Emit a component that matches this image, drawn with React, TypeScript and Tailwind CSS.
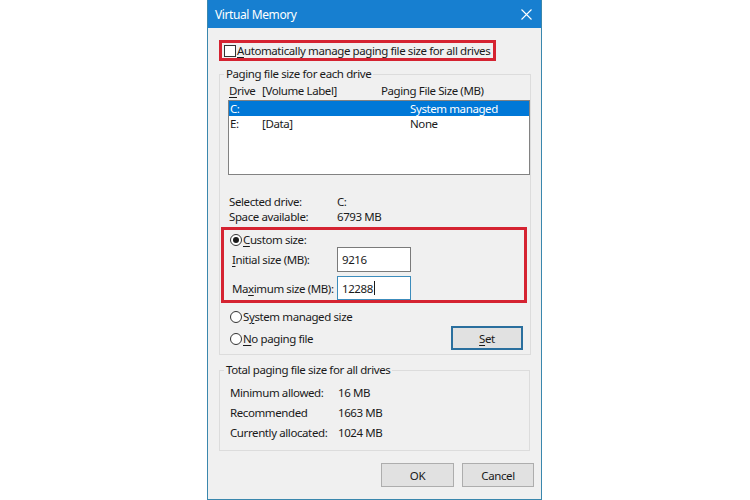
import React from "react";

const U = ({ children }: { children: React.ReactNode }) => (
  <span className="underline underline-offset-2 decoration-1">{children}</span>
);

const Radio = ({ checked }: { checked?: boolean }) => (
  <span className="w-[12px] h-[12px] rounded-full border border-[#333333] bg-white flex items-center justify-center shrink-0">
    {checked && <span className="w-[6px] h-[6px] rounded-full bg-[#1a1a1a]" />}
  </span>
);

export default function App() {
  return (
    <div
      className="w-[750px] h-[500px] bg-white text-[#1a1a1a] text-[11.5px] tracking-[-0.4px] leading-[15px] whitespace-nowrap"
      style={{ fontFamily: '"Noto Sans", "Open Sans", sans-serif' }}
    >
      <div className="ml-[207px] w-[335px] h-[500px] flex flex-col border-x border-b border-[#3a87ad] bg-[#f0f0f0]">
        {/* Title bar */}
        <div className="h-[28px] bg-[#177fd0] flex items-center justify-between pl-[7px] pr-[9px] text-white">
          <span className="pt-[1px] text-[12px]">Virtual Memory</span>
          <svg width="11" height="11" viewBox="0 0 11 11">
            <path d="M0.5 0.5 L10.5 10.5 M10.5 0.5 L0.5 10.5" stroke="white" strokeWidth="1.1" />
          </svg>
        </div>

        <div className="flex flex-col pl-[11px]">
          {/* Red box 1 */}
          <div className="mt-[12px] w-[277px] h-[21px] border-[3px] border-[#d52331] flex items-center">
            <span className="ml-[2px] w-[12px] h-[12px] border border-[#333333] bg-white shrink-0" />
            <span className="ml-[1px]">
              <U>A</U>utomatically manage paging file size for all drives
            </span>
          </div>

          {/* Group 1 */}
          <fieldset className="mt-[5px] w-[311px] h-[289px] border border-[#dcdcdc] flex flex-col">
            <legend className="ml-[4px] px-[2px] leading-[16px]">Paging file size for each drive</legend>
            <div className="h-[16px] pl-[9px] flex items-center">
              <span className="w-[33px]">
                <U>D</U>rive
              </span>
              <span className="w-[119px]">[Volume Label]</span>
              <span>Paging File Size (MB)</span>
            </div>
            <div className="mt-[2px] ml-[8px] w-[302px] h-[75px] border border-[#828282] bg-white flex flex-col">
              <div className="h-[15px] bg-[#0078d7] text-white flex items-center pl-[1px]">
                <span className="w-[32px]">C:</span>
                <span className="w-[148px]"></span>
                <span>System managed</span>
              </div>
              <div className="h-[15px] flex items-center pl-[1px]">
                <span className="w-[32px]">E:</span>
                <span className="w-[148px]">[Data]</span>
                <span>None</span>
              </div>
            </div>

            <div className="mt-[19px] pl-[9px] h-[15px] flex items-center">
              <span className="w-[108px]">Selected drive:</span>
              <span>C:</span>
            </div>
            <div className="pl-[9px] h-[15px] flex items-center">
              <span className="w-[108px]">Space available:</span>
              <span>6793 MB</span>
            </div>

            {/* Red box 2 */}
            <div className="mt-[3px] ml-[1px] w-[306px] h-[76px] border-[3px] border-[#d52331] flex flex-col">
              <div className="mt-[2px] h-[15px] pl-[6px] flex items-center">
                <Radio checked />
                <span className="ml-[1px]">
                  <U>C</U>ustom size:
                </span>
              </div>
              <div className="h-[25px] pl-[8px] flex items-center">
                <span className="w-[105px]">
                  <U>I</U>nitial size (MB):
                </span>
                <div className="w-[74px] h-[25px] border border-[#7a7a7a] bg-white flex items-center pl-[4px]">
                  9216
                </div>
              </div>
              <div className="mt-[4px] h-[24px] pl-[8px] flex items-center">
                <span className="w-[105px]">
                  Ma<U>x</U>imum size (MB):
                </span>
                <div className="w-[74px] h-[24px] border border-[#3c8cbc] bg-white flex items-center pl-[4px]">
                  12288
                  <span className="ml-[1px] w-[1px] h-[14px] bg-[#1a1a1a]" />
                </div>
              </div>
            </div>

            <div className="mt-[6px] flex">
              <div className="pl-[10px] flex flex-col">
                <div className="h-[15px] flex items-center">
                  <Radio />
                  <span className="ml-[1px]">
                    S<U>y</U>stem managed size
                  </span>
                </div>
                <div className="mt-[7px] h-[15px] flex items-center">
                  <Radio />
                  <span className="ml-[1px]">
                    <U>N</U>o paging file
                  </span>
                </div>
              </div>
              <div className="ml-auto mr-[7px] mt-[17px] w-[72px] h-[24px] border-2 border-[#2a6f9e] bg-[#e1e1e1] flex items-center justify-center">
                <span>
                  <U>S</U>et
                </span>
              </div>
            </div>
          </fieldset>

          {/* Group 2 */}
          <fieldset className="mt-[7px] w-[311px] h-[89px] border border-[#dcdcdc] flex flex-col">
            <legend className="ml-[4px] px-[2px] leading-[16px]">Total paging file size for all drives</legend>
            <div className="mt-[4px] pl-[10px] h-[20px] flex items-center">
              <span className="w-[108px]">Minimum allowed:</span>
              <span>16 MB</span>
            </div>
            <div className="pl-[10px] h-[20px] flex items-center">
              <span className="w-[108px]">Recommended</span>
              <span>1663 MB</span>
            </div>
            <div className="pl-[10px] h-[20px] flex items-center">
              <span className="w-[108px]">Currently allocated:</span>
              <span>1024 MB</span>
            </div>
          </fieldset>

          {/* Buttons */}
          <div className="mt-[12px] pr-[7px] flex justify-end gap-[8px]">
            <div className="w-[73px] h-[24px] border border-[#adadad] bg-[#e1e1e1] flex items-center justify-center">
              OK
            </div>
            <div className="w-[72px] h-[24px] border border-[#adadad] bg-[#e1e1e1] flex items-center justify-center">
              Cancel
            </div>
          </div>
        </div>
      </div>
    </div>
  );
}
